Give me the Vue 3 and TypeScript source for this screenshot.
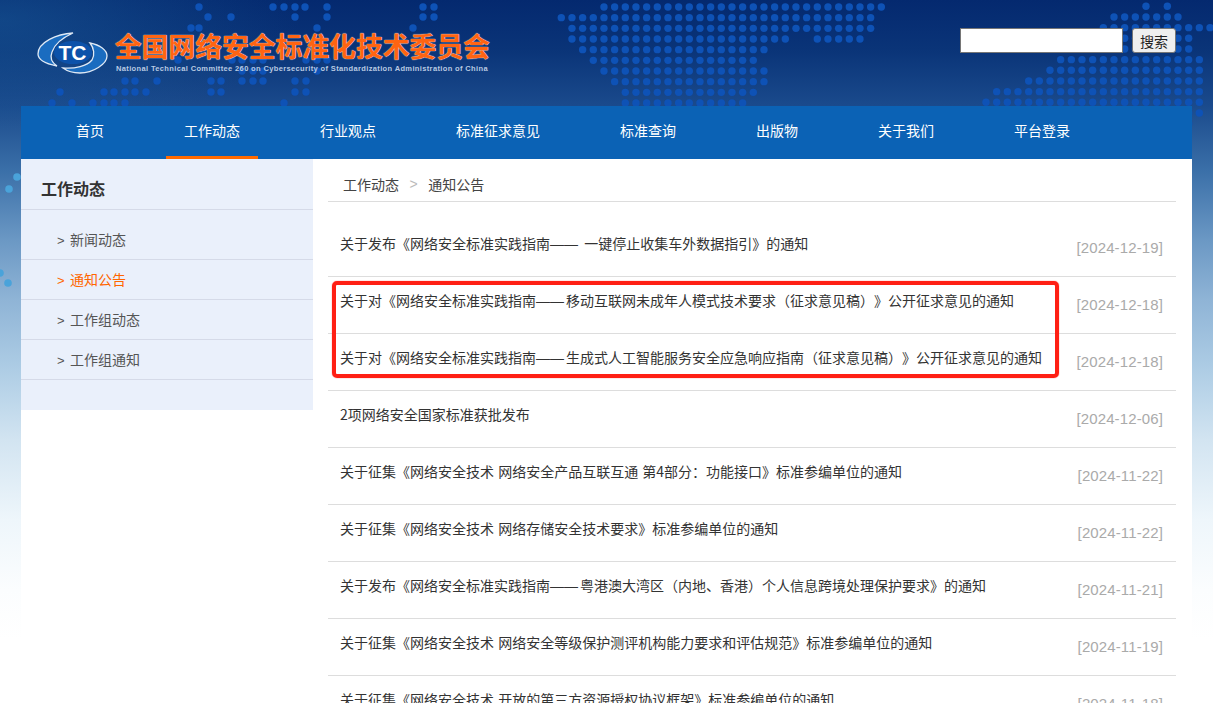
<script setup lang="ts">
interface Notice {
  title: string;
  date: string;
}

const navItems = ["首页", "工作动态", "行业观点", "标准征求意见", "标准查询", "出版物", "关于我们", "平台登录"];
const sideItems = ["新闻动态", "通知公告", "工作组动态", "工作组通知"];

const notices: Notice[] = [
  { title: "关于发布《网络安全标准实践指南—— 一键停止收集车外数据指引》的通知", date: "[2024-12-19]" },
  { title: "关于对《网络安全标准实践指南——移动互联网未成年人模式技术要求（征求意见稿）》公开征求意见的通知", date: "[2024-12-18]" },
  { title: "关于对《网络安全标准实践指南——生成式人工智能服务安全应急响应指南（征求意见稿）》公开征求意见的通知", date: "[2024-12-18]" },
  { title: "2项网络安全国家标准获批发布", date: "[2024-12-06]" },
  { title: "关于征集《网络安全技术 网络安全产品互联互通 第4部分：功能接口》标准参编单位的通知", date: "[2024-11-22]" },
  { title: "关于征集《网络安全技术 网络存储安全技术要求》标准参编单位的通知", date: "[2024-11-22]" },
  { title: "关于发布《网络安全标准实践指南——粤港澳大湾区（内地、香港）个人信息跨境处理保护要求》的通知", date: "[2024-11-21]" },
  { title: "关于征集《网络安全技术 网络安全等级保护测评机构能力要求和评估规范》标准参编单位的通知", date: "[2024-11-19]" },
  { title: "关于征集《网络安全技术 开放的第三方资源授权协议框架》标准参编单位的通知", date: "[2024-11-18]" },
];

// the CJK font draws the long dash short, so it gets its own span
const titleParts = (title: string) => title.split(/(——)/);

// world map dots behind the header: [row, first col, last col]
const PITCH = 32 / 3;
const midRuns = [
  [0, 4, 30], [1, 0, 29], [2, 1, 29], [3, 1, 21], [3, 24, 28], [4, 2, 19],
  [5, 3, 18], [6, 4, 19], [7, 5, 19], [8, 6, 18], [9, 6, 17],
];
const rightRuns = [
  [0, 0, 0], [0, 2, 2], [1, -3, 3], [2, -4, 6], [3, -3, 4], [4, -3, 4], [5, -8, 5],
  [6, -9, 5], [7, -11, 5], [8, -14, 5], [9, -15, 5], [10, 4, 5], [11, 4, 4],
];
const leftDots = [
  [199, 7], [273, 7], [284, 7], [295, 7], [305, 7], [327, 7], [423, 7], [434, 7],
  [208, 17], [231, 17], [295, 17], [327, 17], [423, 17], [434, 17],
  [191, 28], [199, 28], [317, 28], [413, 28],
  [178, 60], [232, 60], [242, 60], [253, 60], [263, 60], [306, 60], [317, 60], [327, 60],
  [242, 71], [253, 71], [263, 71], [317, 71],
  [125, 81], [135, 81], [157, 81], [211, 81], [221, 81], [242, 81], [253, 81], [263, 81], [295, 81], [306, 81],
  [60, 92], [104, 92], [114, 92], [125, 92], [135, 92], [146, 92], [211, 92], [221, 92], [295, 92], [306, 92],
  [52, 103], [72, 103], [93, 103], [104, 103], [114, 103], [125, 103], [284, 103],
];

const mapDots: { x: number; y: number }[] = leftDots.map(([x, y]) => ({ x, y }));
for (const [r, a, b] of midRuns) {
  for (let c = a; c <= b; c++) mapDots.push({ x: 561.3 + c * PITCH, y: 7 + r * PITCH });
}
for (const [r, a, b] of rightRuns) {
  for (let k = a; k <= b; k++) mapDots.push({ x: 1146 + k * PITCH, y: 6.3 + r * PITCH });
}

const glowDots = [
  { x: 17, y: 177 },
  { x: 9, y: 189 },
  { x: 0, y: 273 },
  { x: 8, y: 283 },
];
</script>

<template>
  <div class="page">
    <svg class="map" width="1213" height="300" aria-hidden="true">
      <circle v-for="(d, i) in mapDots" :key="i" :cx="d.x" :cy="d.y" r="3.7" fill="#0e52b6" />
      <circle v-for="(d, i) in glowDots" :key="'g' + i" :cx="d.x" :cy="d.y" r="3.8" fill="#4aa3da" />
    </svg>

    <header class="header">
      <div class="brand">
        <svg class="logo" width="72" height="44" viewBox="0 0 72 44">
          <ellipse cx="36" cy="21.5" rx="19" ry="11.5" fill="#0c52aa" />
          <path
            d="M36 2 C20 3 1 11 1 23 C1 29 10 33 20 35 C14 31 13 26 15 21 C18 12 27 6 36 2 Z"
            fill="#1a6cc0"
            stroke="#dfe9f5"
            stroke-width="1.3"
          />
          <path
            d="M53 12 C63 14 70 19 70 25 C70 33 56 42 43 42 C36 42 30 40 26 37 C38 38 50 35 55 29 C58 24 57 17 53 12 Z"
            fill="#1a6cc0"
            stroke="#dfe9f5"
            stroke-width="1.3"
          />
          <text x="35.5" y="29" text-anchor="middle" class="logo-text">TC</text>
        </svg>
        <div class="brand-text">
          <h1 class="brand-title">全国网络安全标准化技术委员会</h1>
          <p class="brand-sub">National Technical Committee 260 on Cybersecurity of Standardization Administration of China</p>
        </div>
      </div>
      <form class="search" @submit.prevent>
        <input class="search-input" type="text" aria-label="搜索" />
        <button class="search-btn" type="submit">搜索</button>
      </form>
    </header>

    <div class="wrap">
      <nav class="nav">
        <a v-for="item in navItems" :key="item" :class="['nav-item', { active: item === '工作动态' }]">{{ item }}</a>
      </nav>

      <div class="body">
        <aside class="side">
          <h2 class="side-title">工作动态</h2>
          <ul class="side-list">
            <li v-for="item in sideItems" :key="item" :class="['side-item', { active: item === '通知公告' }]">
              <span class="side-arrow">&gt;</span>{{ item }}
            </li>
          </ul>
        </aside>

        <main class="main">
          <div class="crumbs">
            <span>工作动态</span>
            <span class="crumb-sep">&gt;</span>
            <span>通知公告</span>
          </div>
          <div class="list">
            <div v-for="n in notices" :key="n.title" class="row">
              <span class="row-title"><span
                v-for="(part, i) in titleParts(n.title)"
                :key="i"
                :class="{ dash: part === '——' }"
              >{{ part }}</span></span>
              <span class="row-date">{{ n.date }}</span>
            </div>
            <div class="mark"></div>
          </div>
        </main>
      </div>
    </div>
  </div>
</template>

<style scoped>
.page {
  position: relative;
  height: 703px;
  overflow: hidden;
  font-family: "Noto Sans CJK SC", "Liberation Sans", sans-serif;
  text-spacing-trim: space-all;
  color: #333;
  background:
    radial-gradient(ellipse 300px 110px at 0 20px, rgba(30, 100, 160, 0.45), rgba(30, 100, 160, 0)),
    linear-gradient(
      180deg,
      #04296f 0,
      #0a3478 50px,
      #1a4a8c 105px,
      #3a6fa8 170px,
      #6b98c4 240px,
      #8fb4d6 300px,
      #aecde5 370px,
      #d2e4f1 440px,
      #eef6fb 520px,
      #fbfdfe 590px,
      #fff 640px
    );
}

.map {
  position: absolute;
  top: 0;
  left: 0;
  filter: blur(0.4px);
}

.header {
  position: relative;
  height: 106px;
  box-sizing: border-box;
  display: flex;
  justify-content: space-between;
  align-items: flex-start;
  padding: 28px 37px 0 37px;
}

.brand {
  display: flex;
  align-items: flex-start;
  gap: 6px;
  padding-top: 3px;
}

.brand-text {
  display: flex;
  flex-direction: column;
}

.brand-title {
  margin: 0;
  font-size: 26.8px;
  line-height: 30px;
  font-weight: 700;
  color: #ff6412;
  white-space: nowrap;
  text-shadow: 0 0 1px #ffe6d0, 0 0 1px #ffe6d0;
}

.brand-sub {
  margin: 3px 0 0 1px;
  font-family: "Liberation Sans", sans-serif;
  font-size: 7.5px;
  line-height: 10px;
  font-weight: 700;
  letter-spacing: 0.36px;
  color: #b9cae2;
  white-space: nowrap;
}

.logo {
  display: block;
}

.logo-text {
  font-family: "Liberation Sans", sans-serif;
  font-size: 21px;
  font-weight: 700;
  fill: #fff;
}

.search {
  display: flex;
  gap: 9px;
  margin: 0;
}

.search-input {
  width: 163px;
  height: 25px;
  box-sizing: border-box;
  border: 1px solid #767676;
  background: #fff;
  padding: 0 4px;
  border-radius: 0;
  outline: none;
}

.search-btn {
  width: 44px;
  height: 25px;
  box-sizing: border-box;
  padding: 0;
  border: 1px solid #767676;
  border-radius: 3px;
  background: #efefef;
  color: #222;
  font-family: inherit;
  font-size: 14px;
  line-height: 20px;
}

.wrap {
  position: relative;
  width: 1171px;
  margin: 0 auto;
  height: 597px;
  background: #fff;
}

.nav {
  display: flex;
  gap: 44px;
  height: 53px;
  padding-left: 37px;
  background: #0b62b5;
}

.nav-item {
  padding: 0 18px;
  font-size: 14px;
  line-height: 48px;
  color: #fff;
  white-space: nowrap;
}

.nav-item.active {
  box-shadow: inset 0 -3px 0 #ff6a00;
}

.body {
  display: flex;
  align-items: flex-start;
}

.side {
  width: 292px;
  height: 251px;
  flex: none;
  background: #eaf0fb;
}

.side-title {
  margin: 0;
  height: 51px;
  box-sizing: border-box;
  padding-left: 20px;
  border-bottom: 1px solid #d5dae8;
  font-size: 16px;
  line-height: 58px;
  font-weight: 700;
  color: #333;
}

.side-list {
  margin: 0;
  padding: 10px 0 0;
  list-style: none;
}

.side-item {
  height: 40px;
  box-sizing: border-box;
  padding-left: 36px;
  border-bottom: 1px solid #d5dae8;
  font-size: 14px;
  line-height: 38px;
  color: #555;
}

.side-item.active {
  color: #ff6600;
}

.side-arrow {
  margin-right: 5.5px;
  font-family: "Liberation Sans", sans-serif;
  font-size: 13px;
}

.main {
  flex: 1;
  padding: 0 16px 0 15px;
}

.crumbs {
  display: flex;
  height: 43px;
  box-sizing: border-box;
  padding-left: 15px;
  border-bottom: 1px solid #ddd;
  font-size: 14px;
  line-height: 50px;
  color: #444;
}

.crumb-sep {
  margin: 0 10.5px;
  color: #bbb;
  font-family: "Liberation Sans", sans-serif;
}

.list {
  position: relative;
  padding-top: 18px;
}

.row {
  display: flex;
  justify-content: space-between;
  height: 57px;
  box-sizing: border-box;
  padding: 0 13px 0 12px;
  border-bottom: 1px solid #ddd;
}

.row-title {
  font-size: 14px;
  line-height: 46px;
  word-spacing: 1px;
  color: #333;
  white-space: nowrap;
}

.dash {
  padding-right: 2px;
  font-family: "Liberation Sans", sans-serif;
}

.row-date {
  font-family: "Liberation Sans", sans-serif;
  font-size: 15px;
  line-height: 56px;
  letter-spacing: 0.12px;
  color: #aaa;
  white-space: nowrap;
}

/* red annotation drawn over rows 2 and 3 */
.mark {
  position: absolute;
  left: 4px;
  top: 79px;
  width: 727px;
  height: 97px;
  box-sizing: border-box;
  border: 4px solid #ff1f14;
  border-radius: 5px;
  box-shadow: 0 0 1px #ff1f14;
  pointer-events: none;
}
</style>

<style>
html,
body {
  margin: 0;
  overflow: hidden;
}
</style>
